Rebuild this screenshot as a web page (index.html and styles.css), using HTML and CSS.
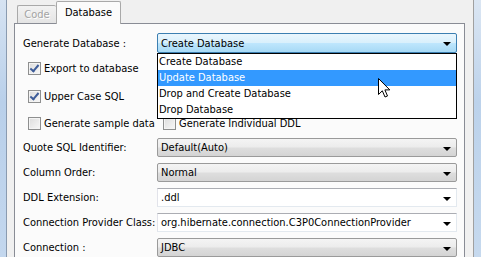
FILE: index.html
```html
<!DOCTYPE html>
<html lang="en">
<head>
    <meta charset="UTF-8">
    <title>Database Options</title>
    <link rel="stylesheet" href="styles.css">
</head>
<body>
    <div class="frame-left"></div>
    <div class="window">
        <div class="tabs">
            <div class="tab tab-disabled">Code</div>
            <div class="tab tab-active">Database</div>
        </div>
        <div class="panel">
            <div class="row row-gen">
                <div class="label">Generate Database :</div>
                <div class="combo combo-hot">Create Database<span class="arrow"></span></div>
                <!-- lista aberta do combo -->
                <div class="dropdown">
                    <div class="item">Create Database</div>
                    <div class="item selected">Update Database</div>
                    <div class="item">Drop and Create Database</div>
                    <div class="item">Drop Database</div>
                    <svg class="cursor" width="13" height="21" viewBox="0 0 13 21">
                        <path d="M0.5 0.5 L0.5 16.5 L4.3 12.8 L7 19 L9.5 18 L6.9 11.9 L11.8 11.9 Z" fill="#fff" stroke="#000" stroke-width="1" stroke-linejoin="miter"/>
                    </svg>
                </div>
            </div>
            <div class="row row-cb1">
                <span class="check checked"></span><span class="cb-label">Export to database</span>
            </div>
            <div class="row row-cb2">
                <span class="check checked"></span><span class="cb-label">Upper Case SQL</span>
            </div>
            <div class="row row-cb3">
                <div class="cb-half">
                    <span class="check"></span><span class="cb-label">Generate sample data</span>
                </div>
                <div class="cb-half">
                    <span class="check"></span><span class="cb-label">Generate Individual DDL</span>
                </div>
            </div>
            <div class="row row-field first-field">
                <div class="label">Quote SQL Identifier:</div>
                <div class="combo">Default(Auto)<span class="arrow"></span></div>
            </div>
            <div class="row row-field">
                <div class="label">Column Order:</div>
                <div class="combo">Normal<span class="arrow"></span></div>
            </div>
            <div class="row row-field">
                <div class="label">DDL Extension:</div>
                <div class="combo combo-edit">.ddl<span class="arrow"></span></div>
            </div>
            <div class="row row-field">
                <div class="label">Connection Provider Class:</div>
                <div class="combo combo-edit">org.hibernate.connection.C3P0ConnectionProvider<span class="arrow"></span></div>
            </div>
            <div class="row row-field">
                <div class="label">Connection :</div>
                <div class="combo">JDBC<span class="arrow"></span></div>
            </div>
        </div>
    </div>
    <div class="frame-right"></div>
</body>
</html>
```
FILE: styles.css
```css
html, body {
    margin: 0;
    padding: 0;
    height: 100%;
    overflow: hidden;
}
body {
    display: flex;
    background-color: #f0f0f0;
    font-family: "DejaVu Sans Condensed", "DejaVu Sans", sans-serif;
    font-size: 11px;
    color: #000;
}
.frame-left {
    width: 6px;
    background: linear-gradient(#d6e3f2, #b9d0ea 40%, #c3d7ee);
    border-right: 1px solid #8a9bb0;
}
.frame-right {
    width: 7px;
    background: linear-gradient(#dbe6f3, #bcd2eb 40%, #c6d9ee);
    border-left: 1px solid #a0a0a0;
}
.window {
    flex: 1;
    padding: 1px 8px 0 7px;
    display: flex;
    flex-direction: column;
}
/* Abas */
.tabs {
    display: flex;
    align-items: flex-end;
    padding-left: 3px;
    height: 22px;
}
.tab {
    box-sizing: border-box;
    border: 1px solid #a9a9a9;
    border-bottom: none;
    border-radius: 2px 2px 0 0;
    display: flex;
    align-items: center;
    justify-content: center;
}
.tab-disabled {
    width: 39px;
    height: 18px;
    color: #a3a3a3;
    text-shadow: 1px 1px 0 #fff;
    background: linear-gradient(#f2f2f2, #e4e4e4);
    border-right: none;
}
.tab-active {
    width: 65px;
    height: 23px;
    margin-bottom: -1px;
    background-color: #fbfbfb;
    position: relative;
    z-index: 1;
    padding-bottom: 2px;
}
.panel {
    flex: 1;
    border: 1px solid #898c95;
    border-bottom: none;
    background-color: #fbfbfb;
    padding: 9px 7px 0 8px;
}
.row {
    display: flex;
    align-items: center;
    white-space: nowrap;
}
.label {
    width: 134px;
    flex-shrink: 0;
}
.row-gen {
    height: 20px;
    position: relative;
}
.row-cb1 { height: 20px; margin-top: 5px; padding-left: 5px; }
.row-cb2 { height: 20px; margin-top: 8px; padding-left: 5px; }
.row-cb3 { height: 20px; margin-top: 7px; padding-left: 5px; }
.cb-half {
    display: flex;
    align-items: center;
    width: 135px;
    flex-shrink: 0;
}
.row-field {
    height: 19px;
    margin-top: 6px;
}
.first-field {
    margin-top: 5px;
}
.check {
    box-sizing: border-box;
    width: 13px;
    height: 13px;
    flex-shrink: 0;
    border: 1px solid #8e8f8f;
    background: linear-gradient(135deg, #dcdcdc, #f8f8f8);
    box-shadow: inset 0 0 0 1px #f4f4f4;
    margin-right: 3px;
    position: relative;
}
.check.checked::after {
    content: "";
    position: absolute;
    left: 3px;
    top: 0;
    width: 3px;
    height: 7px;
    border-right: 2px solid #3d5c99;
    border-bottom: 2px solid #3d5c99;
    transform: rotate(40deg);
}
/* Combos */
.combo {
    box-sizing: border-box;
    width: 300px;
    height: 100%;
    border: 1px solid #9a9a9a;
    border-radius: 2px;
    background: linear-gradient(#f4f4f4, #ececec 48%, #dedede 52%, #d4d4d4);
    padding-left: 3px;
    display: flex;
    align-items: center;
    position: relative;
}
.combo-hot {
    border-color: #3c7fb1;
    background: linear-gradient(#eaf6fd, #d9f0fc 48%, #bee6fd 52%, #a7d9f5);
}
.combo-edit {
    background: #fff;
    border-color: #abadb3 #e3e9ef #e3e9ef #e2e3ea;
    border-radius: 0;
}
.arrow {
    position: absolute;
    right: 5px;
    top: 50%;
    margin-top: -1px;
    border-left: 4px solid transparent;
    border-right: 4px solid transparent;
    border-top: 4px solid #000;
}
/* Lista aberta */
.dropdown {
    position: absolute;
    left: 134px;
    top: 20px;
    width: 300px;
    box-sizing: border-box;
    border: 1px solid #000;
    background-color: #fff;
    z-index: 5;
}
.item {
    height: 16px;
    line-height: 16px;
    padding-left: 1px;
}
.item.selected {
    background-color: #3399ff;
    color: #fff;
}
.cursor {
    position: absolute;
    left: 220px;
    top: 24px;
}
```
